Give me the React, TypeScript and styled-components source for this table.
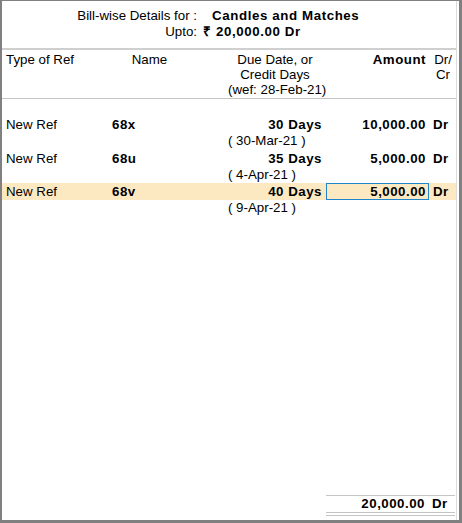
import React from "react";
import styled, { createGlobalStyle } from "styled-components";

const Global = createGlobalStyle`
  html, body { margin: 0; padding: 0; background: #ffffff; }
  body { font-family: "Liberation Sans", Arial, sans-serif; font-size: 13.3px; color: #000; }
  * { box-sizing: border-box; }
`;

const Window = styled.div`
  width: 462px;
  height: 523px;
  border-style: solid;
  border-color: #808080;
  border-width: 1px 3px 3px 2px;
  background: #fff;
  display: flex;
  padding-right: 2px;
`;

const Content = styled.div`
  flex: 1;
  display: flex;
  flex-direction: column;
  border-right: 1px solid #dcdcdc;
`;

const Title = styled.div`
  display: grid;
  grid-template-columns: 195px 1fr;
  line-height: 16px;
  padding: 7px 0 8px;
  border-bottom: 2px solid #cfcfcf;
`;

const TitleLabel = styled.div`
  text-align: right;
  white-space: pre;
`;

const TitleValue = styled.div<{ $indent: number }>`
  padding-left: ${(p) => p.$indent}px;
  font-weight: bold;
  letter-spacing: 0.6px;
  white-space: pre;
`;

const COLS = "106px 82px 38px 98px 103px 1fr";

const HeaderRow = styled.div`
  display: grid;
  grid-template-columns: ${COLS};
  line-height: 15px;
  padding: 2px 0 1px;
  border-bottom: 1px solid #c4c4c4;
`;

const HeadCell = styled.div<{ $align?: string; $bold?: boolean; $col?: string; $pad?: string }>`
  text-align: ${(p) => p.$align || "left"};
  font-weight: ${(p) => (p.$bold ? "bold" : "normal")};
  letter-spacing: ${(p) => (p.$bold ? "0.5px" : "0")};
  grid-column: ${(p) => p.$col || "auto"};
  padding: ${(p) => p.$pad || "0 3px 0 4px"};
  white-space: nowrap;
`;

const Spacer = styled.div`
  height: 17px;
`;

const Entry = styled.div`
  display: flex;
  flex-direction: column;
`;

const MainLine = styled.div<{ $active?: boolean }>`
  display: grid;
  grid-template-columns: ${COLS};
  height: 17px;
  line-height: 17px;
  background: ${(p) => (p.$active ? "#fde9c1" : "transparent")};
`;

const SubLine = styled.div`
  display: grid;
  grid-template-columns: ${COLS};
  height: 16.5px;
  line-height: 16.5px;
`;

const Cell = styled.div<{ $bold?: boolean; $align?: string; $col?: string; $flush?: boolean }>`
  font-weight: ${(p) => (p.$bold ? "bold" : "normal")};
  letter-spacing: ${(p) => (p.$bold ? "0.5px" : "0")};
  text-align: ${(p) => p.$align || "left"};
  grid-column: ${(p) => p.$col || "auto"};
  white-space: pre;
  padding: ${(p) => (p.$flush ? "0" : "0 4px")};
`;

const AmountCell = styled.div<{ $focused?: boolean }>`
  font-weight: bold;
  letter-spacing: 0.5px;
  text-align: right;
  grid-column: 5;
  height: 17px;
  line-height: ${(p) => (p.$focused ? "15px" : "17px")};
  padding-right: ${(p) => (p.$focused ? "2px" : "3px")};
  border: ${(p) => (p.$focused ? "1px solid #1f86cc" : "none")};
  white-space: nowrap;
`;

const Filler = styled.div`
  flex: 1;
`;

const TotalRow = styled.div`
  display: grid;
  grid-template-columns: ${COLS};
  margin-bottom: 4px;
`;

const TotalBox = styled.div`
  grid-column: 5 / 7;
  display: grid;
  grid-template-columns: 103px 1fr;
  border-top: 1px solid #c4c4c4;
  border-bottom: 4px double #c4c4c4;
  height: 21px;
  line-height: 16px;
  margin-right: 1px;
`;

const TotalAmount = styled.div`
  font-weight: bold;
  letter-spacing: 0.5px;
  text-align: right;
  padding-right: 4px;
`;

const TotalDr = styled.div`
  font-weight: bold;
  letter-spacing: 0.5px;
  padding-left: 3px;
`;

const entries = [
  { type: "New Ref", name: "68x", days: "30 Days", date: "( 30-Mar-21 )", amount: "10,000.00", drcr: "Dr" },
  { type: "New Ref", name: "68u", days: "35 Days", date: "( 4-Apr-21 )", amount: "5,000.00", drcr: "Dr" },
  { type: "New Ref", name: "68v", days: "40 Days", date: "( 9-Apr-21 )", amount: "5,000.00", drcr: "Dr", active: true },
];

export default function App() {
  return (
    <>
      <Global />
      <Window>
        <Content>
          <Title>
            <TitleLabel>Bill-wise Details for :</TitleLabel>
            <TitleValue $indent={15}>Candles and Matches</TitleValue>
            <TitleLabel>Upto:</TitleLabel>
            <TitleValue $indent={6}>₹ 20,000.00 Dr</TitleValue>
          </Title>
          <HeaderRow>
            <HeadCell>Type of Ref</HeadCell>
            <HeadCell $align="center">Name</HeadCell>
            <HeadCell $col="4" $align="center" $pad="0 4px 0 0">
              Due Date, or
              <br />
              Credit Days
              <br />
              (wef: 28-Feb-21)
            </HeadCell>
            <HeadCell $align="right" $bold>
              Amount
            </HeadCell>
            <HeadCell $align="center">
              Dr/
              <br />
              Cr
            </HeadCell>
          </HeaderRow>
          <Spacer />
          {entries.map((e, i) => (
            <Entry key={i}>
              <MainLine $active={e.active}>
                <Cell>{e.type}</Cell>
                <Cell $bold>{e.name}</Cell>
                <Cell $col="3 / 5" $align="right" $bold>
                  {e.days}
                </Cell>
                <AmountCell $focused={e.active}>{e.amount}</AmountCell>
                <Cell $bold>{e.drcr}</Cell>
              </MainLine>
              <SubLine>
                <Cell $col="4" $flush>
                  {e.date}
                </Cell>
              </SubLine>
            </Entry>
          ))}
          <Filler />
          <TotalRow>
            <TotalBox>
              <TotalAmount>20,000.00</TotalAmount>
              <TotalDr>Dr</TotalDr>
            </TotalBox>
          </TotalRow>
        </Content>
      </Window>
    </>
  );
}
